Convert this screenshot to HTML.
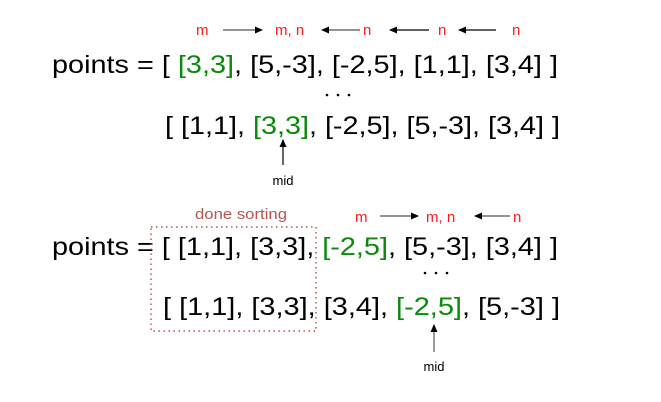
<!DOCTYPE html>
<html><head><meta charset="utf-8"><style>
html,body{margin:0;padding:0;background:#fff;}
svg{display:block;font-family:"Liberation Sans",Arial,sans-serif;}
</style></head><body>
<svg width="661" height="402" viewBox="0 0 661 402" xmlns="http://www.w3.org/2000/svg">
<defs>
<marker id="ag" markerWidth="8" markerHeight="8" refX="7" refY="4" orient="auto" markerUnits="userSpaceOnUse"><path d="M0,0.5 L8,4 L0,7.5 Z" fill="#000"/></marker>
</defs>
<g fill="#ff1a1a" font-size="15">
<text x="196" y="35">m</text>
<text x="275" y="35">m, n</text>
<text x="363" y="35">n</text>
<text x="438" y="35">n</text>
<text x="512" y="35">n</text>
</g>
<g stroke-width="1.3" fill="none">
<line x1="223" y1="30" x2="262" y2="30" stroke="#555" marker-end="url(#ag)"/>
<line x1="360" y1="30" x2="322" y2="30" stroke="#555" marker-end="url(#ag)"/>
<line x1="429" y1="30" x2="390" y2="30" stroke="#000" marker-end="url(#ag)"/>
<line x1="496" y1="30" x2="459" y2="30" stroke="#000" marker-end="url(#ag)"/>
</g>
<g font-size="25" fill="#000">
<text x="52" y="73" textLength="506" lengthAdjust="spacingAndGlyphs">points = [ <tspan fill="#0a8a0a">[3,3]</tspan>, [5,-3], [-2,5], [1,1], [3,4] ]</text>
<text x="165" y="134" textLength="395" lengthAdjust="spacingAndGlyphs">[ [1,1], <tspan fill="#0a8a0a">[3,3]</tspan>, [-2,5], [5,-3], [3,4] ]</text>
<text x="52" y="255" textLength="506" lengthAdjust="spacingAndGlyphs">points = [ [1,1], [3,3], <tspan fill="#0a8a0a">[-2,5]</tspan>, [5,-3], [3,4] ]</text>
<text x="163" y="315" textLength="397" lengthAdjust="spacingAndGlyphs">[ [1,1], [3,3], [3,4], <tspan fill="#0a8a0a">[-2,5]</tspan>, [5,-3] ]</text>
</g>
<g fill="#000">
<circle cx="327" cy="95" r="1.3"/><circle cx="338" cy="95" r="1.3"/><circle cx="349" cy="95" r="1.3"/>
<circle cx="425" cy="273" r="1.3"/><circle cx="436" cy="273" r="1.3"/><circle cx="447" cy="273" r="1.3"/>
</g>
<line x1="283" y1="165" x2="283" y2="140" stroke="#000" stroke-width="1.2" marker-end="url(#ag)"/>
<text x="283" y="185" font-size="13" text-anchor="middle" fill="#000">mid</text>
<text x="195" y="219" font-size="15" fill="#b85450" textLength="92" lengthAdjust="spacingAndGlyphs">done sorting</text>
<rect x="151" y="227" width="165" height="104" fill="none" stroke="#b85450" stroke-width="1.5" stroke-dasharray="1.5,3.5"/>
<g fill="#ff1a1a" font-size="15">
<text x="355" y="222">m</text>
<text x="426" y="222">m, n</text>
<text x="513" y="222">n</text>
</g>
<line x1="380" y1="216" x2="418" y2="216" stroke="#555" stroke-width="1.3" marker-end="url(#ag)"/>
<line x1="510" y1="216" x2="475" y2="216" stroke="#555" stroke-width="1.3" marker-end="url(#ag)"/>
<line x1="434" y1="352" x2="434" y2="325" stroke="#555" stroke-width="1.2" marker-end="url(#ag)"/>
<text x="434" y="371" font-size="13" text-anchor="middle" fill="#000">mid</text>
</svg>
</body></html>
